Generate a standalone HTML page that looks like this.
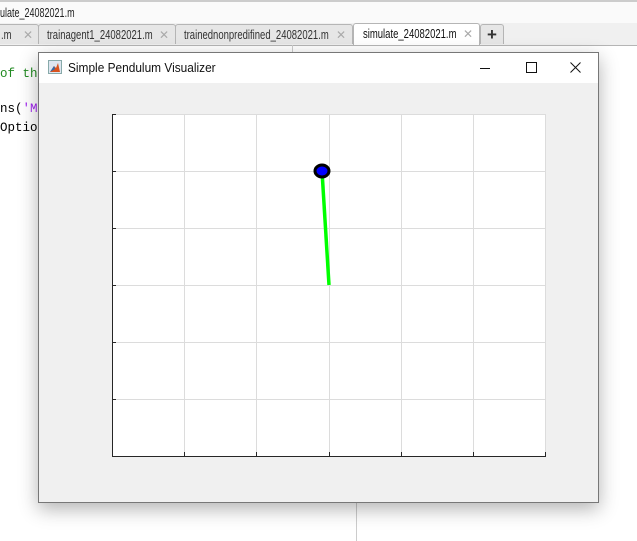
<!DOCTYPE html>
<html><head><style>
body{margin:0;width:637px;height:541px;background:#fff;position:relative;overflow:hidden;font-family:"Liberation Sans",sans-serif;}
.t{position:absolute;font-size:12px;color:#222;}
.n{display:inline-block;transform:scaleX(.76);transform-origin:left;white-space:nowrap}
.tab{position:absolute;top:24px;height:20px;background:#e6e6e6;border:1px solid #b5b5b5;border-bottom:none;border-radius:3px 3px 0 0;font-size:12.5px;color:#333;line-height:20px;box-sizing:border-box;padding-left:8px;white-space:nowrap;overflow:hidden}
.x{position:absolute;right:6px;top:0;color:#aaa;font-size:12px;}
.code{position:absolute;font-family:"Liberation Mono",monospace;font-size:12.5px;}
</style></head><body>
<div style="position:absolute;left:0;top:0;width:637px;height:2px;background:#ccc"></div>
<div style="position:absolute;left:0;top:2px;width:637px;height:21px;background:#fafafa;border-bottom:1px solid #ccc"></div>
<div class="t" style="left:0;top:6px;font-size:12.5px"><span class="n" style="transform:scaleX(.72)">ulate_24082021.m</span></div>
<div style="position:absolute;left:0;top:23px;width:637px;height:22px;background:#f0f0f0;border-bottom:1px solid #b5b5b5"></div>
<div class="tab" style="left:-4px;width:43px;padding-left:4px"><span class="n">.m</span><span class="x" style="right:5px">✕</span></div>
<div class="tab" style="left:38px;width:138px"><span class="n">trainagent1_24082021.m</span><span class="x">✕</span></div>
<div class="tab" style="left:175px;width:178px"><span class="n">trainednonpredifined_24082021.m</span><span class="x">✕</span></div>
<div class="tab" style="left:353px;width:127px;background:#fff;height:22px;top:23px;padding-left:9px;color:#111"><span class="n">simulate_24082021.m</span><span class="x">✕</span></div>
<div class="tab" style="left:480px;width:24px;padding-left:6px;font-size:17px;font-weight:bold">+</div>
<div style="position:absolute;left:292px;top:45px;width:1px;height:8px;background:#ccc"></div>
<div style="position:absolute;left:356px;top:503px;width:1px;height:38px;background:#ccc"></div>
<div class="code" style="left:0;top:67px;color:#228b22">of the</div>
<div class="code" style="left:0;top:102px">ns(<span style="color:#a020f0">'Ma</span></div>
<div class="code" style="left:0;top:121px">Option</div>
<div style="position:absolute;left:38px;top:52px;width:561px;height:451px;background:#f0f0f0;border:1px solid #777;box-sizing:border-box;box-shadow:0 6px 18px rgba(0,0,0,0.3)">
 <div style="position:absolute;left:0;top:0;width:559px;height:30px;background:#fff"></div>
 <svg style="position:absolute;left:9px;top:7px" width="14" height="14" viewBox="0 0 14 14"><rect x="0.5" y="0.5" width="13" height="13" fill="#dde6f0" stroke="#8aa"/><path d="M2 12 L6 6 L8 8 L10 3 L12 12Z" fill="#d8531f"/><path d="M2 12 L6 6 L7 9Z" fill="#2b6cb0"/></svg>
 <div class="t" style="left:29px;top:8px;font-size:12.5px;color:#111"><span class="n" style="transform:scaleX(.95)">Simple Pendulum Visualizer</span></div>
 <div style="position:absolute;left:441px;top:15px;width:10px;height:1px;background:#111"></div>
 <div style="position:absolute;left:487px;top:9px;width:9px;height:9px;border:1px solid #111"></div>
 <svg style="position:absolute;left:531px;top:9px" width="11" height="11"><path d="M0.5 0.5L10.5 10.5M10.5 0.5L0.5 10.5" stroke="#111" stroke-width="1"/></svg>
</div>
<svg style="position:absolute;left:0;top:0" width="637" height="541">
 <rect x="112" y="114" width="433" height="342" fill="#fff"/>
 <g stroke="#dcdcdc" stroke-width="1">
  <line x1="184.5" y1="114" x2="184.5" y2="456"/><line x1="256.5" y1="114" x2="256.5" y2="456"/><line x1="329.5" y1="114" x2="329.5" y2="456"/><line x1="401.5" y1="114" x2="401.5" y2="456"/><line x1="473.5" y1="114" x2="473.5" y2="456"/><line x1="545.5" y1="114" x2="545.5" y2="456"/>
  <line x1="112" y1="114.5" x2="545" y2="114.5"/><line x1="112" y1="171.5" x2="545" y2="171.5"/><line x1="112" y1="228.5" x2="545" y2="228.5"/><line x1="112" y1="285.5" x2="545" y2="285.5"/><line x1="112" y1="342.5" x2="545" y2="342.5"/><line x1="112" y1="399.5" x2="545" y2="399.5"/>
 </g>
 <g stroke="#262626" stroke-width="1">
  <line x1="112.5" y1="114" x2="112.5" y2="456"/><line x1="112" y1="456.5" x2="546" y2="456.5"/>
  <line x1="112" y1="114.5" x2="116" y2="114.5"/><line x1="112" y1="171.5" x2="116" y2="171.5"/><line x1="112" y1="228.5" x2="116" y2="228.5"/><line x1="112" y1="285.5" x2="116" y2="285.5"/><line x1="112" y1="342.5" x2="116" y2="342.5"/><line x1="112" y1="399.5" x2="116" y2="399.5"/>
  <line x1="184.5" y1="452" x2="184.5" y2="456"/><line x1="256.5" y1="452" x2="256.5" y2="456"/><line x1="329.5" y1="452" x2="329.5" y2="456"/><line x1="401.5" y1="452" x2="401.5" y2="456"/><line x1="473.5" y1="452" x2="473.5" y2="456"/><line x1="545.5" y1="452" x2="545.5" y2="456"/>
 </g>
 <line x1="322" y1="171" x2="329" y2="285" stroke="#00ff00" stroke-width="3.5"/>
 <ellipse cx="322" cy="171" rx="7" ry="6" fill="#0000ff" stroke="#000" stroke-width="3"/>
</svg>
</body></html>
